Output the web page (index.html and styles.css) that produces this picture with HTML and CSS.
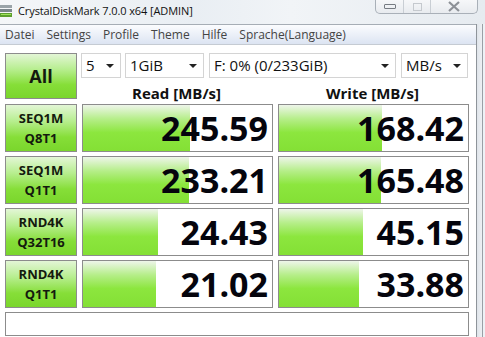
FILE: index.html
```html
<html>
  <head>
    <title>CrystalDiskMark 7.0.0 x64 [ADMIN]</title>
    <link rel="stylesheet" href="styles.css">
  </head>
  <body>
    <div class="window">
      <div class="titlebar">
        <svg class="app-icon" width="14" height="18" viewBox="0 0 14 18">
          <rect x="0" y="3" width="12" height="3" fill="#9aa3a8" />
          <rect x="0" y="7" width="12" height="3" fill="#7c868c" />
          <rect x="0" y="11" width="12" height="4" fill="#5d9f2f" />
          <rect x="1" y="12" width="10" height="1" fill="#9fe35a" />
        </svg>
        <span class="title">CrystalDiskMark 7.0.0 x64 [ADMIN]</span>
        <div class="caption-buttons">
          <div class="cap cap-min"><span class="min-glyph"></span></div>
          <div class="cap cap-max"><span class="max-glyph"></span></div>
          <div class="cap cap-close">
            <svg width="12" height="11" viewBox="0 0 12 11">
              <path d="M1 1 L11 10 M11 1 L1 10" stroke="#8d9197" stroke-width="2.2" fill="none" />
            </svg>
          </div>
        </div>
      </div>

      <div class="body-row">
        <div class="client">
          <div class="menubar">
            <span>Datei</span>
            <span>Settings</span>
            <span>Profile</span>
            <span>Theme</span>
            <span>Hilfe</span>
            <span>Sprache(Language)</span>
          </div>

          <div class="panel">
            <div class="top">
              <div class="green-btn all-btn">All</div>
              <div class="top-right">
                <div class="combos">
                  <div class="combo c-count">5<span class="arrow"></span></div>
                  <div class="combo c-size">1GiB<span class="arrow"></span></div>
                  <div class="combo c-drive">F: 0% (0/233GiB)<span class="arrow"></span></div>
                  <div class="combo c-unit">MB/s<span class="arrow"></span></div>
                </div>
                <div class="heads">
                  <div class="head">Read [MB/s]</div>
                  <div class="head">Write [MB/s]</div>
                </div>
              </div>
            </div>

            <div class="results">
              <div class="green-btn test-btn">SEQ1M<br />Q8T1</div>
              <div class="meter"><div class="fill" style="width: 107px"></div><span>245.59</span></div>
              <div class="meter"><div class="fill" style="width: 103px"></div><span>168.42</span></div>

              <div class="green-btn test-btn">SEQ1M<br />Q1T1</div>
              <div class="meter"><div class="fill" style="width: 106px"></div><span>233.21</span></div>
              <div class="meter"><div class="fill" style="width: 102px"></div><span>165.48</span></div>

              <div class="green-btn test-btn">RND4K<br />Q32T16</div>
              <div class="meter"><div class="fill" style="width: 75px"></div><span>24.43</span></div>
              <div class="meter"><div class="fill" style="width: 84px"></div><span>45.15</span></div>

              <div class="green-btn test-btn">RND4K<br />Q1T1</div>
              <div class="meter"><div class="fill" style="width: 73px"></div><span>21.02</span></div>
              <div class="meter"><div class="fill" style="width: 80px"></div><span>33.88</span></div>

              <div class="comment"></div>
            </div>
          </div>
        </div>
        <div class="frame-right"></div>
      </div>
    </div>
  </body>
</html>
```

FILE: styles.css
```css
body {
  margin: 0;
  font-family: "Open Sans", "Noto Sans", sans-serif;
  background: #eef2f6;
}

.window {
  width: 485px;
  height: 337px;
  overflow: hidden;
}

/* title bar (blurred aero glass) */
.titlebar {
  height: 24px;
  display: flex;
  align-items: flex-start;
  background: linear-gradient(90deg, #f4f6f8 0%, #e9eef3 40%, #f1f4f7 60%, #e6ebf0 100%);
}

.app-icon {
  margin-top: 2px;
}

.title {
  margin-left: 4px;
  margin-top: 3px;
  font-size: 11px;
  color: #111;
  letter-spacing: -0.1px;
}

.caption-buttons {
  margin-left: auto;
  margin-right: 7px;
  display: flex;
  height: 13px;
  border: 1px solid #a9b0b8;
  border-top: none;
  border-radius: 0 0 5px 5px;
  background: linear-gradient(#f6f7f9, #e8ebef);
}

.cap {
  display: flex;
  align-items: center;
  justify-content: center;
}

.cap-min {
  width: 27px;
  border-right: 1px solid #c9ced4;
}

.cap-max {
  width: 26px;
  border-right: 1px solid #c9ced4;
}

.cap-close {
  width: 46px;
}

.min-glyph {
  width: 10px;
  height: 3px;
  border: 1px solid #777c83;
  border-radius: 1px;
}

.max-glyph {
  width: 7px;
  height: 6px;
  border: 1px solid #c5c9ce;
}

.body-row {
  display: flex;
}

.client {
  width: 476px;
  background: #fff;
}

.frame-right {
  width: 5px;
  height: 313px;
  border-left: 1px solid #8e949a;
  border-right: 1px solid #9aa0a6;
  background: linear-gradient(90deg, #dfe4ea, #eef1f4);
}

/* menu bar */
.menubar {
  height: 19px;
  border-top: 1px solid #a6adb5;
  border-bottom: 1px solid #c5cbd3;
  background: linear-gradient(#fbfcfe, #dce4f2);
  display: flex;
  align-items: center;
  gap: 12px;
  padding-left: 5px;
  font-size: 12px;
  color: #444;
}

.panel {
  padding: 8px 0 0 5px;
}

.top {
  display: flex;
  gap: 4px;
}

.green-btn {
  box-sizing: border-box;
  border: 1px solid #8c8c8c;
  background: linear-gradient(#e3f6d6 0%, #b7ee8f 35%, #86de38 70%, #7ad62c 100%);
  color: #141a0e;
  font-weight: bold;
  display: flex;
  align-items: center;
  justify-content: center;
  text-align: center;
}

.all-btn {
  width: 72px;
  height: 46px;
  font-size: 18px;
}

.combos {
  display: flex;
  gap: 5px;
}

.combo {
  box-sizing: border-box;
  position: relative;
  height: 25px;
  border: 1px solid #d4d4d4;
  padding-left: 4px;
  font-size: 15px;
  line-height: 22px;
  color: #111;
}

.c-count {
  width: 40px;
  margin-right: -1px;
}

.c-size {
  width: 79px;
}

.c-drive {
  width: 187px;
}

.c-unit {
  width: 67px;
}

.arrow {
  position: absolute;
  right: 6px;
  top: 10px;
  border-left: 4px solid transparent;
  border-right: 4px solid transparent;
  border-top: 4px solid #222;
}

.heads {
  display: flex;
  gap: 5px;
  padding-top: 4px;
}

.head {
  width: 191px;
  text-align: center;
  font-size: 15px;
  font-weight: bold;
  line-height: 22px;
  color: #111;
}

/* result rows */
.results {
  margin-top: 0;
  display: grid;
  grid-template-columns: 72px 191px 191px;
  grid-auto-rows: 48px;
  gap: 4px 5px;
}

.test-btn {
  font-size: 13px;
  line-height: 20px;
}

.meter {
  box-sizing: border-box;
  border: 1px solid #8c8c8c;
  background: #fff;
  display: flex;
  align-items: center;
  justify-content: flex-end;
  position: relative;
}

.fill {
  position: absolute;
  left: 0;
  top: 0;
  bottom: 0;
  background: linear-gradient(#eef5ea 0%, #b6ee8a 30%, #8ce63e 60%, #84e035 100%);
}

.meter span {
  position: relative;
  font-size: 34px;
  font-weight: bold;
  color: #05050d;
  padding-right: 4px;
}

.comment {
  grid-column: 1 / 4;
  height: 24px;
  box-sizing: border-box;
  border: 1px solid #8c8c8c;
}
```
